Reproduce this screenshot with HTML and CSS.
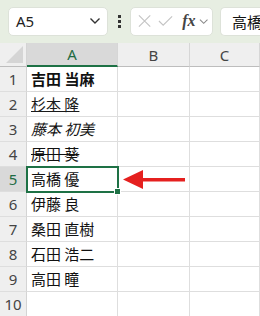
FILE: index.html
```html
<!DOCTYPE html>
<html lang="ja">
<head>
  <meta charset="UTF-8" />
  <title>sheet</title>
  <link rel="stylesheet" href="styles.css">
</head>
<body>

  <div class="toolbar">
    <div class="namebox">
      <span>A5</span>
      <svg width="12" height="8" viewBox="0 0 12 8"><path d="M1.5 1.5 L6 6 L10.5 1.5" fill="none" stroke="#333" stroke-width="1.4"/></svg>
    </div>
    <div class="dots"><i></i><i></i><i></i></div>
    <div class="fbox">
      <svg width="14" height="14" viewBox="0 0 14 14"><path d="M1 1 L13 13 M13 1 L1 13" stroke="#c4c4c4" stroke-width="1.2"/></svg>
      <svg width="16" height="12" viewBox="0 0 16 12"><path d="M1 6 L5.5 10.5 L15 1" fill="none" stroke="#c4c4c4" stroke-width="1.2"/></svg>
      <span class="fx">fx</span>
      <svg width="10" height="7" viewBox="0 0 10 7"><path d="M1 1.5 L5 5.5 L9 1.5" fill="none" stroke="#888" stroke-width="1.1"/></svg>
    </div>
    <div class="formula">高橋 優</div>
  </div>

  <div class="sheet">
    <div class="corner"><span class="tri"></span></div>
    <div class="colhead active">A</div>
    <div class="colhead">B</div>
    <div class="colhead">C</div>

    <div class="rowhead">1</div><div class="cell bold">吉田 当麻</div><div class="cell"></div><div class="cell"></div>
    <div class="rowhead">2</div><div class="cell under">杉本 隆</div><div class="cell"></div><div class="cell"></div>
    <div class="rowhead">3</div><div class="cell ital">藤本 初美</div><div class="cell"></div><div class="cell"></div>
    <div class="rowhead">4</div><div class="cell strike">原田 葵</div><div class="cell"></div><div class="cell"></div>
    <div class="rowhead active">5</div><div class="cell">高橋 優</div><div class="cell"></div><div class="cell"></div>
    <div class="rowhead">6</div><div class="cell">伊藤 良</div><div class="cell"></div><div class="cell"></div>
    <div class="rowhead">7</div><div class="cell">桑田 直樹</div><div class="cell"></div><div class="cell"></div>
    <div class="rowhead">8</div><div class="cell">石田 浩二</div><div class="cell"></div><div class="cell"></div>
    <div class="rowhead">9</div><div class="cell">高田 瞳</div><div class="cell"></div><div class="cell"></div>
    <div class="rowhead">10</div><div class="cell"></div><div class="cell"></div><div class="cell"></div>

    <!-- selection box on A5 -->
    <div class="selection"><span class="handle"></span></div>

    <svg class="arrow" width="66" height="22" viewBox="0 0 66 22">
      <path d="M0 10.5 L20 1 L20 9 L62 9 L62 12.5 L20 12.5 L20 20 Z" fill="#e5201f"/>
    </svg>
  </div>

</body>
</html>
```

FILE: styles.css
```css
body {
  margin: 0;
  width: 260px;
  height: 316px;
  overflow: hidden;
  background: #fff;
  font-family: "Noto Sans CJK JP", "Noto Sans", sans-serif;
  color: #111;
}

.toolbar {
  display: flex;
  align-items: center;
  height: 43px;
  padding: 0 0 1px 8px;
  box-sizing: border-box;
  background-color: #e7eee2;
  white-space: nowrap;
  overflow: hidden;
}

.namebox,
.fbox,
.formula {
  flex-shrink: 0;
  height: 29px;
  background: #fff;
  border: 1px solid #dde2d9;
  border-radius: 5px;
  box-sizing: border-box;
  display: flex;
  align-items: center;
}

.namebox {
  width: 100px;
  padding: 0 6px 0 7px;
  justify-content: space-between;
  font-family: "Noto Sans", sans-serif;
  font-size: 15px;
  color: #222;
}

.dots {
  flex-shrink: 0;
  width: 22px;
  display: flex;
  flex-direction: column;
  align-items: center;
  gap: 2px;
}

.dots i {
  width: 3px;
  height: 3px;
  background: #333;
}

.fbox {
  width: 83px;
  padding: 0 4px 0 7px;
  gap: 7px;
}

.fx {
  font-family: "Liberation Serif", serif;
  font-style: italic;
  font-weight: bold;
  font-size: 16px;
  color: #444;
  margin-left: 2px;
  margin-right: -4px;
}

.formula {
  margin-left: 7px;
  width: 50px;
  padding-left: 11px;
  border-right: none;
  border-radius: 5px 0 0 5px;
  font-size: 15px;
  overflow: hidden;
}

.sheet {
  position: relative;
  display: grid;
  grid-template-columns: 27px 91px 72px 70px;
  grid-template-rows: 24px repeat(10, 25px);
}

.corner {
  background: #efefef;
  border-right: 1px solid #d4d4d4;
  border-bottom: 1px solid #bdbdbd;
  position: relative;
}

.tri {
  position: absolute;
  right: 3px;
  bottom: 3px;
  width: 0;
  height: 0;
  border-left: 17px solid transparent;
  border-bottom: 17px solid #d5d5d5;
}

.colhead {
  background: #efefef;
  border-right: 1px solid #d6d6d6;
  border-bottom: 1px solid #bdbdbd;
  font-family: "Noto Sans", sans-serif;
  font-size: 15px;
  color: #444;
  display: flex;
  align-items: center;
  justify-content: center;
}

.colhead.active {
  background: #d9d9d9;
  color: #1f6b43;
  border-bottom: 2px solid #1e7145;
}

.rowhead {
  background: #efefef;
  border-right: 1px solid #d4d4d4;
  border-bottom: 1px solid #dedede;
  font-family: "Noto Sans", sans-serif;
  font-size: 15px;
  color: #444;
  display: flex;
  align-items: center;
  justify-content: center;
}

.rowhead.active {
  background: #d9d9d9;
  color: #1f6b43;
}

.cell {
  border-right: 1px solid #dedede;
  border-bottom: 1px solid #dedede;
  font-size: 15px;
  line-height: 24px;
  padding-left: 4px;
  white-space: nowrap;
  overflow: hidden;
}

.bold { font-weight: bold; }
.under { text-decoration: underline; color: #1a1a1a; }
.ital { font-style: italic; }
.strike { text-decoration: line-through; }

.selection {
  position: absolute;
  left: 26px;
  top: 123px;
  width: 93px;
  height: 27px;
  border: 2px solid #1e7145;
  box-sizing: border-box;
}

.handle {
  position: absolute;
  right: -4px;
  bottom: -4px;
  width: 5px;
  height: 5px;
  background: #1e7145;
  border: 1px solid #fff;
}

.arrow {
  position: absolute;
  left: 123px;
  top: 126px;
}
```
